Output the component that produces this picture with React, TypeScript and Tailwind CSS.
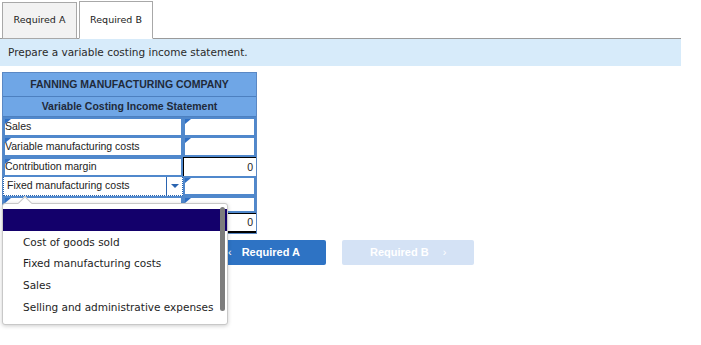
import React from "react";

function Flag() {
  return (
    <span className="absolute left-0 top-0 w-0 h-0 border-t-[5px] border-t-[#2f6fc4] border-r-[6px] border-r-transparent" />
  );
}

function InputCell({ text, flag = true, className = "" }: { text?: string; flag?: boolean; className?: string }) {
  return (
    <div className={"relative h-full bg-white border-2 border-[#5088cc] flex items-center " + className}>
      {flag && <Flag />}
      {text && <span className="text-[10.5px] text-[#222]">{text}</span>}
    </div>
  );
}

export default function App() {
  return (
    <div className="relative w-[701px] h-[345px] bg-white overflow-hidden font-['DejaVu_Sans',sans-serif] text-[#222]">
      {/* tabs */}
      <div className="w-[681px] h-[39px] flex items-end gap-[2px] pl-[2px] border-b border-[#9a9a9a]">
        <div className="w-[75px] h-[37px] -mb-px bg-[#f2f2f2] border border-[#a8a8a8] flex items-center justify-center text-[9.5px]">
          Required A
        </div>
        <div className="w-[74px] h-[38px] -mb-px bg-white border border-[#a8a8a8] border-b-white flex items-center justify-center text-[9.5px]">
          Required B
        </div>
      </div>

      {/* instructions */}
      <div className="w-[681px] h-[27px] bg-[#d7ebfa] pl-[8px] flex items-center text-[10.5px] text-[#2a2a2a]">
        Prepare a variable costing income statement.
      </div>

      {/* statement */}
      <div className="ml-[2px] mt-[6px] w-[255px] font-['Liberation_Sans',Arial,sans-serif] border border-[#5a88c4]">
        <div className="h-[24px] bg-[#6fa6e6] border-b border-[#4d80c0] flex items-center justify-center text-[10.5px] font-bold text-[#1f2a3a]">
          FANNING MANUFACTURING COMPANY
        </div>
        <div className="h-[20px] bg-[#6fa6e6] border-b border-[#4d80c0] flex items-center justify-center text-[10.5px] font-bold text-[#1f2a3a]">
          Variable Costing Income Statement
        </div>
        <div className="grid grid-cols-[180px_73px] h-[19px]">
          <InputCell text="Sales" />
          <InputCell />
        </div>
        <div className="grid grid-cols-[180px_73px] h-[21px]">
          <InputCell text="Variable manufacturing costs" />
          <InputCell />
        </div>
        <div className="grid grid-cols-[180px_73px] h-[19px]">
          <InputCell text="Contribution margin" />
          <div className="h-full bg-white border-t border-black border-l border-[#5088cc] flex items-center justify-end pr-[3px] text-[10.5px]">0</div>
        </div>
        <div className="grid grid-cols-[180px_73px] h-[20px]">
          <div className="h-full bg-white border border-dotted border-[#2a64b0] flex items-center">
            <span className="flex-1 pl-[3px] text-[10.5px]">Fixed manufacturing costs</span>
            <div className="w-[16px] h-full border-l border-[#2a64b0] flex items-center justify-center">
              <span className="w-0 h-0 border-l-[4px] border-r-[4px] border-t-[4px] border-l-transparent border-r-transparent border-t-[#2a64b0]" />
            </div>
          </div>
          <InputCell />
        </div>
        <div className="grid grid-cols-[180px_73px] h-[17px]">
          <InputCell />
          <InputCell />
        </div>
        <div className="grid grid-cols-[180px_73px] h-[20px]">
          <InputCell flag={false} />
          <div className="h-full bg-white border-t border-black border-b-2 border-b-black flex items-center justify-end pr-[3px] text-[10.5px]">0</div>
        </div>
      </div>

      {/* navigation */}
      <div className="ml-[226px] mt-[6px] flex gap-[16px] font-['Liberation_Sans',Arial,sans-serif] text-[11px] font-bold text-white">
        <div className="w-[100px] h-[25px] bg-[#2e73c4] rounded-[2px] flex items-center pl-[2px] gap-[10px]">
          <span className="font-normal">&lsaquo;</span>
          <span>Required A</span>
        </div>
        <div className="w-[132px] h-[25px] bg-[#d4e2f5] rounded-[2px] flex items-center pl-[28px] gap-[14px]">
          <span>Required B</span>
          <span className="font-normal">&rsaquo;</span>
        </div>
      </div>

      {/* dropdown popup */}
      <div className="absolute left-[2px] top-[203px] w-[226px] h-[122px] bg-white border border-[#c8c8c8] rounded-[3px] shadow-[0_1px_4px_rgba(0,0,0,0.2)]">
        <span className="absolute left-[17px] -top-[6px] w-[10px] h-[10px] bg-white border-l border-t border-[#c8c8c8] rotate-45" />
        <div className="relative mt-[5px] h-[22px] bg-[#13006b]" />
        <div className="flex flex-col text-[10.5px] text-[#1e1e1e] pl-[20px]">
          <div className="h-[22px] flex items-center pt-[1px]">Cost of goods sold</div>
          <div className="h-[22px] flex items-center">Fixed manufacturing costs</div>
          <div className="h-[22px] flex items-center">Sales</div>
          <div className="h-[22px] flex items-center">Selling and administrative expenses</div>
        </div>
        <span className="absolute left-[217px] top-[3px] w-[5px] h-[104px] bg-[#7c7c7c] rounded-full" />
      </div>
    </div>
  );
}
